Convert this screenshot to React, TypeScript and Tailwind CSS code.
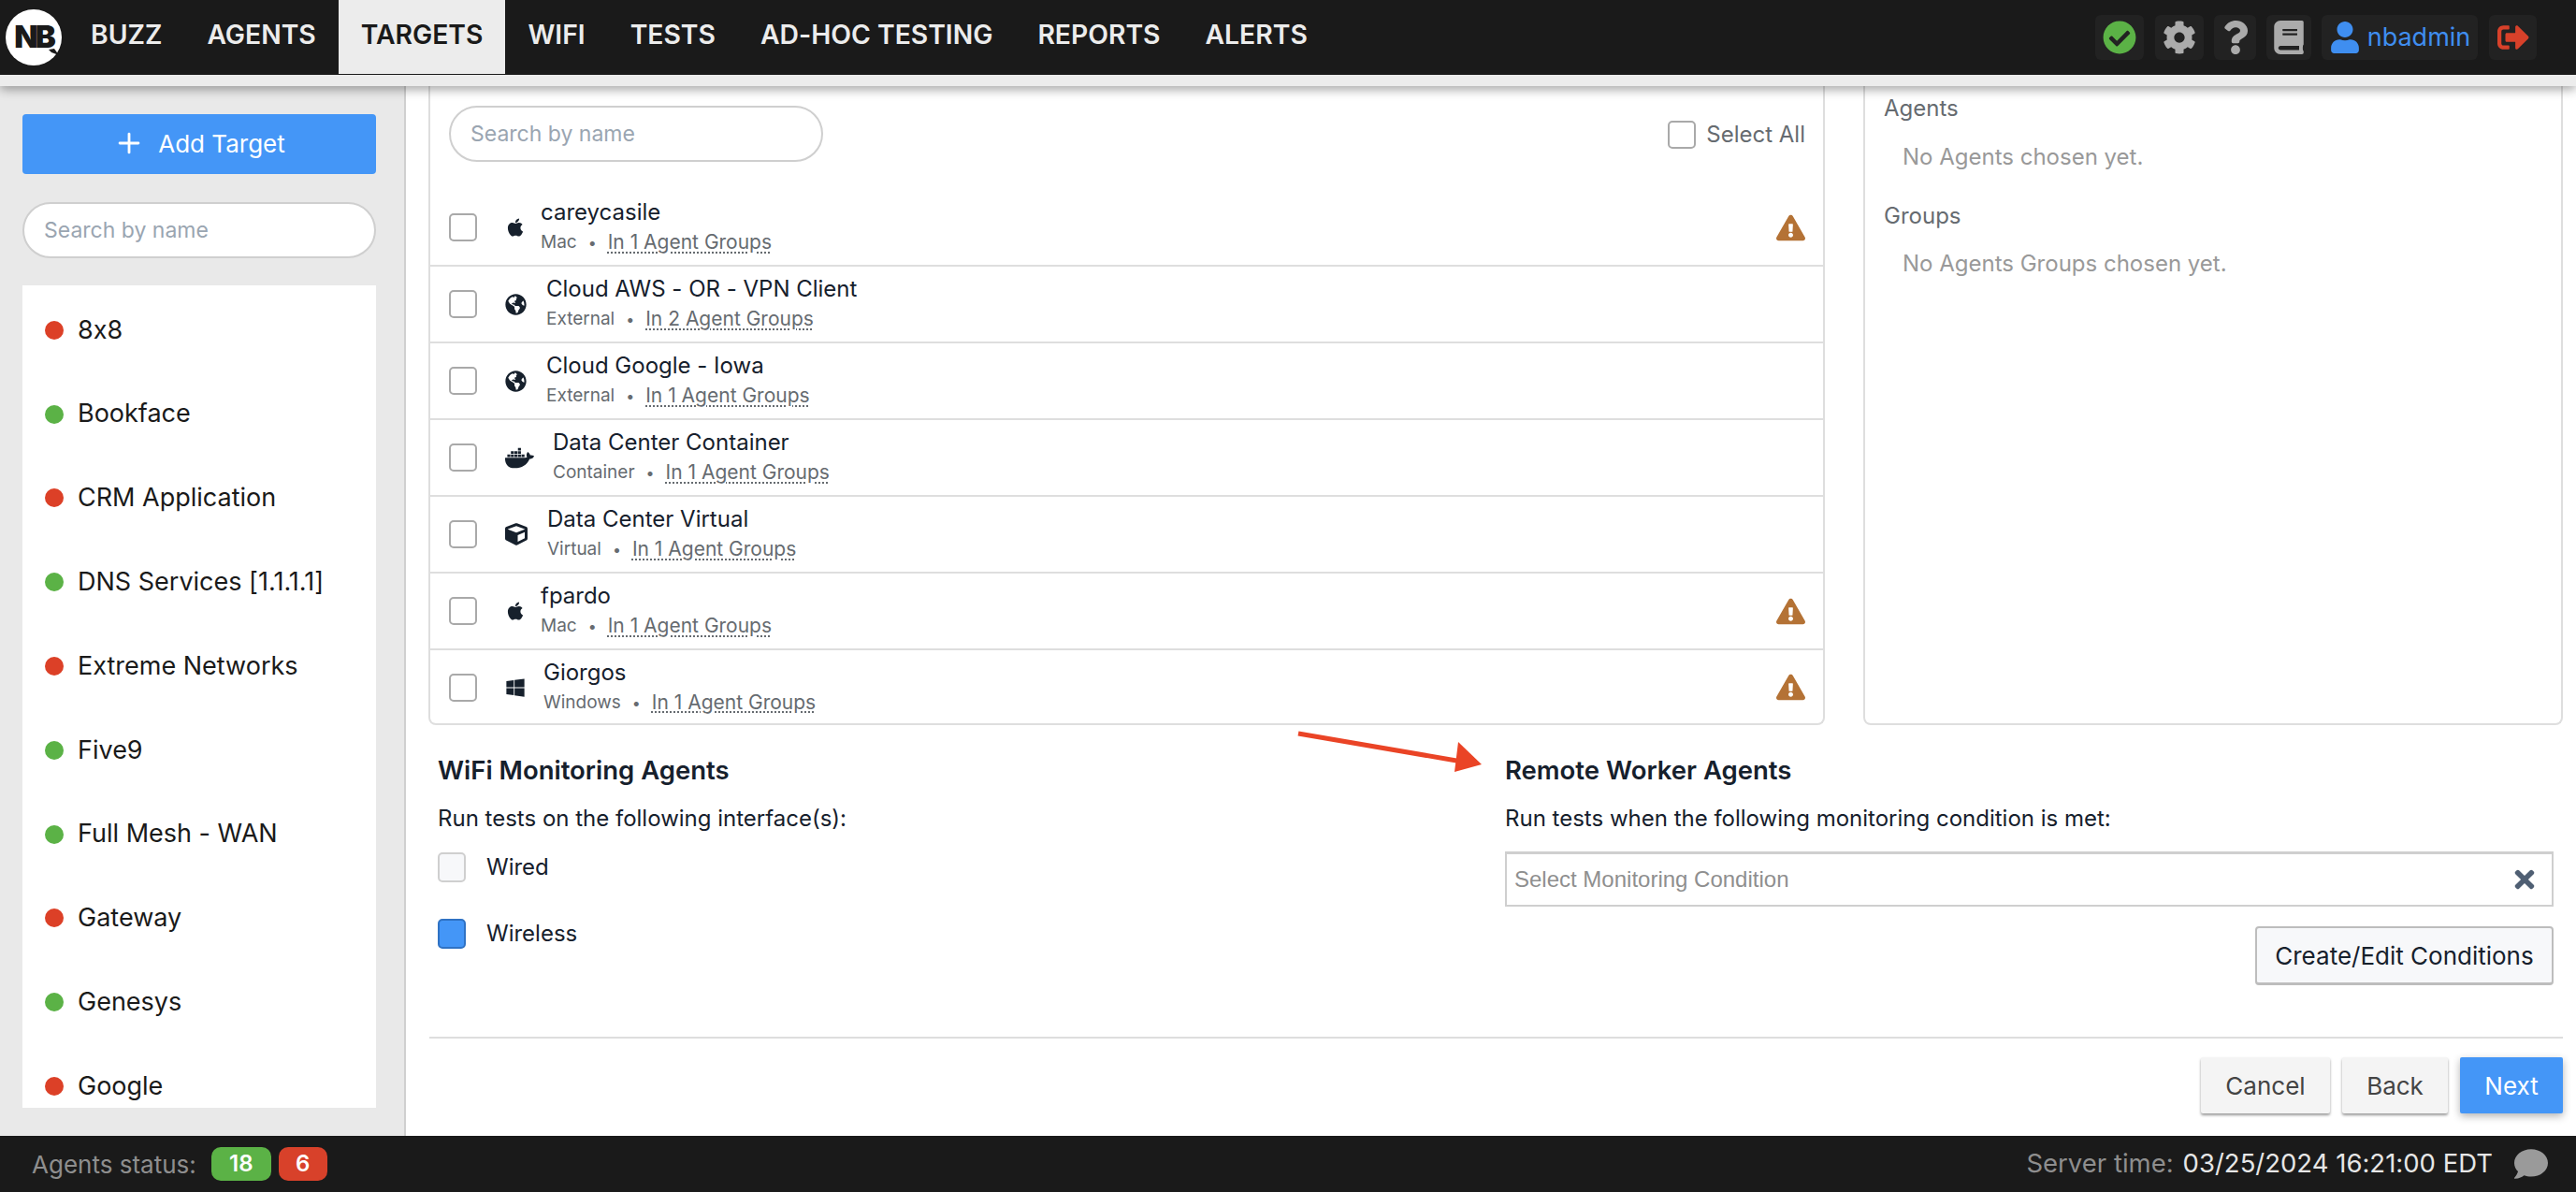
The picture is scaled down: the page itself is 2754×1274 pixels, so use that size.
import { Plus } from 'lucide-react';
import {
  FaApple, FaBook, FaCheckCircle, FaCog, FaComment, FaCube, FaDocker, FaExclamationTriangle,
  FaGlobeAmericas, FaQuestion, FaSignOutAlt, FaTimes, FaUser, FaWindows,
} from 'react-icons/fa';

const NAV = ['BUZZ', 'AGENTS', 'TARGETS', 'WIFI', 'TESTS', 'AD-HOC TESTING', 'REPORTS', 'ALERTS'];

const TARGETS = [
  { name: '8x8', up: false },
  { name: 'Bookface', up: true },
  { name: 'CRM Application', up: false },
  { name: 'DNS Services [1.1.1.1]', up: true },
  { name: 'Extreme Networks', up: false },
  { name: 'Five9', up: true },
  { name: 'Full Mesh - WAN', up: true },
  { name: 'Gateway', up: false },
  { name: 'Genesys', up: true },
  { name: 'Google', up: false },
];

const AGENTS = [
  { name: 'careycasile', kind: 'Mac', groups: 'In 1 Agent Groups', icon: <FaApple className="text-[22px]" />, slot: 'w-[38px]', warn: true },
  { name: 'Cloud AWS - OR - VPN Client', kind: 'External', groups: 'In 2 Agent Groups', icon: <FaGlobeAmericas className="text-[23px]" />, slot: 'w-[44px]', warn: false },
  { name: 'Cloud Google - Iowa', kind: 'External', groups: 'In 1 Agent Groups', icon: <FaGlobeAmericas className="text-[23px]" />, slot: 'w-[44px]', warn: false },
  { name: 'Data Center Container', kind: 'Container', groups: 'In 1 Agent Groups', icon: <FaDocker className="text-[31px]" />, slot: 'w-[51px]', warn: false },
  { name: 'Data Center Virtual', kind: 'Virtual', groups: 'In 1 Agent Groups', icon: <FaCube className="text-[24px]" />, slot: 'w-[45px]', warn: false },
  { name: 'fpardo', kind: 'Mac', groups: 'In 1 Agent Groups', icon: <FaApple className="text-[22px]" />, slot: 'w-[38px]', warn: true },
  { name: 'Giorgos', kind: 'Windows', groups: 'In 1 Agent Groups', icon: <FaWindows className="text-[22px]" />, slot: 'w-[41px]', warn: true },
];

function Checkbox() {
  return <span className="block w-[30px] h-[30px] shrink-0 rounded-[5px] border-2 border-[#a9a9a9] bg-white" />;
}

function SearchBox({ className }: { className: string }) {
  return (
    <div className={`${className} flex h-[60px] items-center rounded-full border-2 border-[#cfcfcf] bg-white px-[21px] text-[23px] text-[#9aa5b1]`}>
      Search by name
    </div>
  );
}

function AgentRow({ agent, last }: { agent: (typeof AGENTS)[number]; last: boolean }) {
  return (
    <div className={`flex shrink-0 items-center pl-[20px] pr-[19px] ${last ? 'h-[79px]' : 'h-[82px] border-b-2 border-[#dedede]'}`}>
      <Checkbox />
      <span className={`ml-[30px] flex shrink-0 justify-start text-[#16202c] ${agent.slot}`}>{agent.icon}</span>
      <div className="flex-1 pb-[2px]">
        <div className="text-[24px] leading-[30px] text-[#16202c]">{agent.name}</div>
        <div className="mt-[4px] flex items-center text-[19px] leading-[26px] text-[#666b70]">
          <span>{agent.kind}</span>
          <span className="mx-[12px] text-[16px]">•</span>
          <span className="text-[21px] underline decoration-dotted underline-offset-[3px]">{agent.groups}</span>
        </div>
      </div>
      {agent.warn && <FaExclamationTriangle className="text-[31px] text-[#b47235]" />}
    </div>
  );
}

export default function App() {
  return (
    <div className="flex h-[1274px] w-full flex-col overflow-hidden bg-white text-[#16202c] [font-family:Inter,'Noto_Sans',sans-serif] [font-feature-settings:'calt'_0]">
      {/* top bar */}
      <header className="relative z-20 flex h-[80px] shrink-0 items-center bg-[#1a1a1a]">
        <div className="relative ml-[6px] flex h-[60px] w-[60px] items-center justify-center rounded-full bg-white text-[33px] font-black tracking-[-3px] text-[#1a1a1a]">
          NB
          <svg className="absolute left-[46px] top-[40px]" width="12" height="10" viewBox="0 0 12 10">
            <path d="M0 3 L6 2 L11 9 L3 6 Z" fill="#1a1a1a" />
          </svg>
        </div>
        <nav className="ml-[7px] flex h-full">
          {NAV.map((item) => (
            <div
              key={item}
              className={`flex h-[79px] items-center px-[24px] pb-[5px] text-[28.3px] font-semibold ${item === 'TARGETS' ? 'bg-[#ececec] text-[#1a1a1a]' : 'text-[#ececec]'}`}
            >
              {item}
            </div>
          ))}
        </nav>
        <div className="ml-auto mr-[42px] flex items-center">
          <span className="flex h-[48px] w-[52px] items-center justify-center rounded-[6px] bg-[#222222] text-[36px] text-[#5bb246]"><FaCheckCircle /></span>
          <span className="ml-[12px] flex h-[48px] w-[52px] items-center justify-center rounded-[6px] bg-[#222222] text-[36px] text-[#ababab]"><FaCog /></span>
          <span className="ml-[11px] flex h-[48px] w-[45px] items-center justify-center rounded-[6px] bg-[#222222] text-[36px] text-[#ababab]"><FaQuestion /></span>
          <span className="ml-[11px] flex h-[48px] w-[48px] items-center justify-center rounded-[6px] bg-[#222222] text-[36px] text-[#ababab]"><FaBook /></span>
          <span className="ml-[11px] flex h-[48px] w-[167px] items-center justify-center gap-[7px] rounded-[6px] bg-[#222222] text-[27px] text-[#3f8ef0]"><FaUser className="text-[34px]" />nbadmin</span>
          <span className="ml-[12px] flex h-[48px] w-[51px] items-center justify-center rounded-[6px] bg-[#222222] text-[34px] text-[#d8412a]"><FaSignOutAlt /></span>
        </div>
      </header>
      <div className="relative z-10 h-[12px] shrink-0 bg-[#ececec] shadow-[0_3px_12px_rgba(0,0,0,0.4)]" />

      <div className="flex min-h-0 flex-1">
        {/* targets sidebar */}
        <aside className="flex w-[434px] shrink-0 flex-col border-r-2 border-[#cfcfcf] bg-[#e9e9e9] pl-[24px] pr-[30px] pt-[30px] pb-[30px]">
          <button className="flex h-[64px] items-center justify-center rounded-[4px] bg-[#4496f7] pb-[2px] text-[26px] text-white">
            <Plus className="mr-[14px] h-[34px] w-[34px]" strokeWidth={2} />
            Add Target
          </button>
          <SearchBox className="mt-[30px]" />
          <div className="mt-[29px] min-h-0 flex-1 overflow-hidden bg-white pt-[3px]">
            {TARGETS.map((t) => (
              <div key={t.name} className="flex h-[89.8px] items-center pl-[24px] text-[27px] text-[#1a1a1a]">
                <span className={`mr-[15px] h-[20px] w-[20px] rounded-full ${t.up ? 'bg-[#5bb246]' : 'bg-[#dc4027]'}`} />
                {t.name}
              </div>
            ))}
          </div>
        </aside>

        <main className="relative min-w-0 flex-1 pl-[24px] pr-[14px]">
          <div className="flex h-[683px] gap-[41px]">
            <section className="flex w-[1493px] shrink-0 flex-col rounded-b-[8px] border-x-2 border-b-2 border-[#dedede]">
              <div className="flex h-[111px] shrink-0 items-start justify-between pr-[19px] pl-[20px] pt-[21px]">
                <SearchBox className="w-[400px]" />
                <label className="mt-[13px] flex items-center gap-[11px] text-[24px] text-[#666b70]">
                  <Checkbox />
                  Select All
                </label>
              </div>
              {AGENTS.map((a, i) => (
                <AgentRow key={a.name} agent={a} last={i === AGENTS.length - 1} />
              ))}
            </section>
            <section className="flex-1 rounded-b-[8px] border-x-2 border-b-2 border-[#dedede] px-[20px] pt-[9px]">
              <h4 className="text-[24px] leading-[30px] text-[#666b70]">Agents</h4>
              <p className="mt-[22px] pl-[20px] text-[24px] leading-[30px] text-[#999999]">No Agents chosen yet.</p>
              <h4 className="mt-[33px] text-[24px] leading-[30px] text-[#666b70]">Groups</h4>
              <p className="mt-[21px] pl-[20px] text-[24px] leading-[30px] text-[#999999]">No Agents Groups chosen yet.</p>
            </section>
          </div>

          <div className="flex pt-[31px]">
            <div className="w-[1151px] shrink-0 pl-[10px]">
              <h3 className="text-[27.5px] font-semibold leading-[34px]">WiFi Monitoring Agents</h3>
              <p className="mt-[18px] text-[24px] leading-[34px]">Run tests on the following interface(s):</p>
              <div className="mt-[17px] flex items-center gap-[22px] text-[24px]">
                <span className="h-[32px] w-[30px] rounded-[5px] border-2 border-[#cfcfcf] bg-[#f7f8fa]" />
                Wired
              </div>
              <div className="mt-[35px] flex items-center gap-[22px] text-[24px]">
                <span className="h-[32px] w-[30px] rounded-[5px] border-2 border-[#2f72c4] bg-[#4496f7]" />
                Wireless
              </div>
            </div>
            <div className="flex w-[1121px] shrink-0 flex-col">
              <h3 className="text-[27.5px] font-semibold leading-[34px]">Remote Worker Agents</h3>
              <p className="mt-[18px] text-[24px] leading-[34px]">Run tests when the following monitoring condition is met:</p>
              <div className="mt-[18px] flex h-[59px] items-center justify-between border-2 border-[#cfcfcf] border-t-[3px] pl-[8px] pr-[14px] text-[24px] text-[#8f8f8f] [font-family:'Liberation_Sans',sans-serif]">
                Select Monitoring Condition
                <FaTimes className="text-[30px] text-[#4f5f73]" />
              </div>
              <button className="mt-[21px] h-[63px] w-[319px] self-end rounded-[4px] border-2 border-b-[3px] border-[#bdbdbd] bg-[#f7f8fa] text-[26px] text-[#16202c]">
                Create/Edit Conditions
              </button>
            </div>
          </div>

          <div className="absolute bottom-[104px] left-[25px] right-[14px] h-[2px] bg-[#dedede]" />
          <div className="absolute bottom-[24px] right-[14px] flex gap-[13px] text-[26px]">
            <button className="h-[60px] w-[138px] rounded-[2px] bg-[#f4f4f4] text-[#444444] shadow-[0_2px_3px_rgba(0,0,0,0.4)]">Cancel</button>
            <button className="h-[60px] w-[113px] rounded-[2px] bg-[#f4f4f4] text-[#444444] shadow-[0_2px_3px_rgba(0,0,0,0.4)]">Back</button>
            <button className="h-[60px] w-[110px] rounded-[2px] bg-[#4496f7] text-white shadow-[0_3px_8px_rgba(0,0,0,0.3)]">Next</button>
          </div>

          {/* red annotation arrow */}
          <svg className="absolute left-[953px] top-[689px]" width="200" height="46" viewBox="0 0 200 46">
            <path d="M1 3 L176 33" stroke="#ea4426" strokeWidth="5" fill="none" />
            <path d="M172 12 L197 36 L168 44 Z" fill="#ea4426" />
          </svg>
        </main>
      </div>

      {/* status bar */}
      <footer className="z-20 flex h-[60px] shrink-0 items-center bg-[#1a1a1a] pl-[34px] pr-[30px] text-[26px]">
        <span className="text-[#8e8e8e]">Agents status:</span>
        <span className="ml-[16px] flex h-[36px] w-[64px] items-center justify-center rounded-[10px] bg-[#5bb246] text-[24px] font-semibold text-white">18</span>
        <span className="ml-[8px] flex h-[36px] w-[52px] items-center justify-center rounded-[10px] bg-[#d8412a] text-[24px] font-semibold text-white">6</span>
        <span className="ml-auto text-[27.5px] text-[#8e8e8e]">Server time:</span>
        <span className="ml-[10px] text-[27.5px] text-[#e6e6e6]">03/25/2024 16:21:00 EDT</span>
        <FaComment className="ml-[23px] text-[36px] text-[#9a9a9a]" />
      </footer>
    </div>
  );
}
